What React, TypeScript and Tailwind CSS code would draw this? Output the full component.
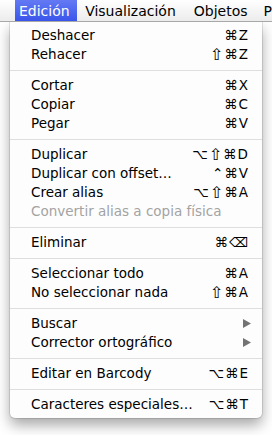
import React from "react";

type Item =
  | { sep: true }
  | { label: string; keys?: string; disabled?: boolean; submenu?: boolean; sep?: false };

const items: Item[] = [
  { label: "Deshacer", keys: "⌘Z" },
  { label: "Rehacer", keys: "⇧⌘Z" },
  { sep: true },
  { label: "Cortar", keys: "⌘X" },
  { label: "Copiar", keys: "⌘C" },
  { label: "Pegar", keys: "⌘V" },
  { sep: true },
  { label: "Duplicar", keys: "⌥⇧⌘D" },
  { label: "Duplicar con offset…", keys: "⌃⌘V" },
  { label: "Crear alias", keys: "⌥⇧⌘A" },
  { label: "Convertir alias a copia física", disabled: true },
  { sep: true },
  { label: "Eliminar", keys: "⌘⌫" },
  { sep: true },
  { label: "Seleccionar todo", keys: "⌘A" },
  { label: "No seleccionar nada", keys: "⇧⌘A" },
  { sep: true },
  { label: "Buscar", submenu: true },
  { label: "Corrector ortográfico", submenu: true },
  { sep: true },
  { label: "Editar en Barcody", keys: "⌥⌘E" },
  { sep: true },
  { label: "Caracteres especiales…", keys: "⌥⌘T" },
];

function SubmenuArrow() {
  return (
    <svg width="8" height="9" viewBox="0 0 8 9" className="mr-[-3px]">
      <polygon points="0,0 8,4.5 0,9" fill="#737373" />
    </svg>
  );
}

// the shift arrow is narrow in DejaVu, so it gets a bigger size
function Keys({ keys }: { keys: string }) {
  return (
    <span className="flex items-center gap-[1px]">
      {Array.from(keys).map((k, i) =>
        k === "⇧" ? (
          <span key={i} className="text-[16px] leading-none">
            {k}
          </span>
        ) : (
          <span key={i}>{k}</span>
        )
      )}
    </span>
  );
}

export default function App() {
  return (
    <div
      className="w-[272px] h-[435px] bg-white overflow-hidden text-black"
      style={{ fontFamily: '"DejaVu Sans", "Noto Sans", sans-serif' }}
    >
      {/* Menu bar */}
      <div className="relative z-10 h-[22px] flex items-stretch bg-gradient-to-b from-white to-[#ececec] border-b border-[#a8a8a8] text-[14px] leading-none whitespace-nowrap">
        <div className="ml-[15px] px-[4px] w-[63px] flex items-center bg-gradient-to-b from-[#6479f4] to-[#3a55ea] text-white">
          Edición
        </div>
        <div className="px-[8px] flex items-center">Visualización</div>
        <div className="px-[10px] flex items-center">Objetos</div>
        <div className="pl-[6px] flex items-center">P</div>
      </div>

      {/* Dropdown */}
      <div className="ml-[10px] w-[252px] py-[4px] bg-[#fdfdfd] rounded-b-[5px] shadow-[0_0_0_1px_rgba(0,0,0,0.1),0_7px_14px_rgba(0,0,0,0.35)] text-[13.5px] leading-none">
        {items.map((it, i) =>
          it.sep ? (
            <div key={i} className="h-[12px] flex items-center">
              <div className="h-px w-full bg-[#dedede]" />
            </div>
          ) : (
            <div
              key={i}
              className={`h-[19px] pl-[21px] pr-[14px] flex items-center justify-between whitespace-nowrap ${
                it.disabled ? "text-[#a3a3a3]" : "text-black"
              }`}
            >
              <span>{it.label}</span>
              {it.keys && <Keys keys={it.keys} />}
              {it.submenu && <SubmenuArrow />}
            </div>
          )
        )}
      </div>
    </div>
  );
}
